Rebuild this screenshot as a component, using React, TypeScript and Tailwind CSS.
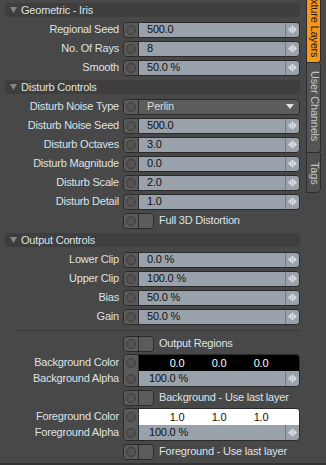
import type { ReactNode } from 'react';

const FONT = "font-['Liberation_Sans',Arial,sans-serif] text-[11px] tracking-[-0.2px]";

function SliderIcon() {
  return (
    <svg width="9" height="9" viewBox="0 0 9 9">
      <polygon points="0,4.5 3.6,1 3.6,8" fill="#d6dbdf" />
      <rect x="4" y="0.5" width="1" height="8" fill="#d6dbdf" />
      <polygon points="5.4,1 9,4.5 5.4,8" fill="#d6dbdf" />
    </svg>
  );
}

function Circle() {
  return <span className="block h-[10px] w-[10px] rounded-full border border-[#3c3c3c] bg-[#545454]" />;
}

function ToggleCell() {
  return (
    <div className="flex w-[15px] shrink-0 items-center justify-center border-r border-[#2c2c2c] bg-[#5a5a5a]">
      <Circle />
    </div>
  );
}

function Header({ title }: { title: string }) {
  return (
    <div className="flex h-[20px] items-center pl-[5px]">
      <div className="flex h-[14px] w-[295px] items-center rounded-[4px] bg-[#3e3e3e] pl-[5px]">
        <svg width="7" height="6" viewBox="0 0 7 6" className="mr-[4px]">
          <polygon points="0,0 7,0 3.5,6" fill="#858585" />
        </svg>
        <span className="leading-none text-[#dde2e6]">{title}</span>
      </div>
    </div>
  );
}

function Row({ label, children }: { label: string; children: ReactNode }) {
  return (
    <div className="flex h-[19px] items-center">
      <div className="w-[119px] shrink-0 text-right leading-none text-[#dde2e6]">{label}</div>
      <div className="ml-[4px] w-[177px]">{children}</div>
    </div>
  );
}

function NumberField({ value }: { value: string }) {
  return (
    <div className="flex h-[16px] overflow-hidden rounded-[4px] border border-[#2a2a2a]">
      <ToggleCell />
      <div className="flex flex-1 items-center bg-[#99a2aa] pl-[8px] leading-none text-[#111]">{value}</div>
      <div className="flex w-[14px] items-center justify-center border-l border-[#737a80] bg-[#99a2aa]">
        <SliderIcon />
      </div>
    </div>
  );
}

function Dropdown({ value }: { value: string }) {
  return (
    <div className="flex h-[16px] overflow-hidden rounded-[4px] border border-[#2a2a2a]">
      <ToggleCell />
      <div className="flex flex-1 items-center justify-between bg-[#5c5c5c] pl-[8px] pr-[5px] leading-none text-[#dadada]">
        <span>{value}</span>
        <svg width="8" height="5" viewBox="0 0 8 5">
          <polygon points="0,0 8,0 4,5" fill="#e2e2e2" />
        </svg>
      </div>
    </div>
  );
}

function CheckRow({ label }: { label: string }) {
  return (
    <div className="flex h-[19px] items-center pl-[123px]">
      <div className="flex h-[16px] w-[31px] overflow-hidden rounded-[4px] border border-[#2a2a2a]">
        <ToggleCell />
        <div className="flex-1 bg-[#5c5c5c]" />
      </div>
      <span className="ml-[5px] leading-none text-[#dde2e6]">{label}</span>
    </div>
  );
}

function ColorBlock({ name, value, light }: { name: string; value: string; light: boolean }) {
  return (
    <div className="flex h-[35px] items-center">
      <div className="flex w-[119px] shrink-0 flex-col text-right leading-none text-[#dde2e6]">
        <div className="flex h-[16px] items-center justify-end">{name} Color</div>
        <div className="flex h-[16px] items-center justify-end">{name} Alpha</div>
      </div>
      <div className="ml-[4px] flex h-[33px] w-[177px] overflow-hidden rounded-[4px] border border-[#2a2a2a]">
        <div className="flex w-[15px] shrink-0 flex-col border-r border-[#2c2c2c] bg-[#5a5a5a]">
          <div className="flex h-[16px] items-center justify-center">
            <Circle />
          </div>
          <div className="flex h-[15px] items-center justify-center">
            <Circle />
          </div>
        </div>
        <div className="flex flex-1 flex-col">
          <div
            className={`flex h-[16px] items-center pl-[17px] leading-none ${
              light ? 'bg-white text-[#111]' : 'bg-black text-white'
            }`}>
            {[value, value, value].map((v, i) => (
              <span key={i} className="w-[42px] text-center">
                {v}
              </span>
            ))}
          </div>
          <div className="flex flex-1">
            <div className="flex flex-1 items-center bg-[#99a2aa] pl-[10px] leading-none text-[#111]">100.0 %</div>
            <div className="flex w-[14px] items-center justify-center border-l border-[#737a80] bg-[#99a2aa]">
              <SliderIcon />
            </div>
          </div>
        </div>
      </div>
    </div>
  );
}

function Tabs() {
  return (
    <div className="ml-[2px] flex w-[15px] flex-col">
      <div className="flex h-[63px] flex-col justify-end overflow-hidden rounded-br-[3px] border border-t-0 border-[#2e2e2e] bg-[#f5961e]">
        <span className="whitespace-nowrap pb-[5px] pl-[1px] leading-none text-[#24190a] [writing-mode:vertical-rl]">
          Texture Layers
        </span>
      </div>
      <div className="flex h-[90px] flex-col overflow-hidden rounded-r-[3px] border border-t-0 border-[#2e2e2e] bg-[#555555]">
        <span className="whitespace-nowrap pl-[1px] pt-[8px] leading-none text-[#c4c8cc] [writing-mode:vertical-rl]">
          User Channels
        </span>
      </div>
      <div className="flex h-[40px] flex-col overflow-hidden rounded-br-[5px] border border-t-0 border-[#2e2e2e] bg-[#4f4f4f]">
        <span className="whitespace-nowrap pl-[1px] pt-[9px] leading-none text-[#c4c8cc] [writing-mode:vertical-rl]">
          Tags
        </span>
      </div>
    </div>
  );
}

export default function App() {
  return (
    <div className={`flex h-[465px] w-[326px] border-b-2 border-[#333] bg-[#484848] ${FONT}`}>
      <div className="w-[304px] shrink-0">
        <Header title="Geometric - Iris" />
        <Row label="Regional Seed">
          <NumberField value="500.0" />
        </Row>
        <Row label="No. Of Rays">
          <NumberField value="8" />
        </Row>
        <Row label="Smooth">
          <NumberField value="50.0 %" />
        </Row>

        <Header title="Disturb Controls" />
        <Row label="Disturb Noise Type">
          <Dropdown value="Perlin" />
        </Row>
        <Row label="Disturb Noise Seed">
          <NumberField value="500.0" />
        </Row>
        <Row label="Disturb Octaves">
          <NumberField value="3.0" />
        </Row>
        <Row label="Disturb Magnitude">
          <NumberField value="0.0" />
        </Row>
        <Row label="Disturb Scale">
          <NumberField value="2.0" />
        </Row>
        <Row label="Disturb Detail">
          <NumberField value="1.0" />
        </Row>
        <CheckRow label="Full 3D Distortion" />

        <Header title="Output Controls" />
        <Row label="Lower Clip">
          <NumberField value="0.0 %" />
        </Row>
        <Row label="Upper Clip">
          <NumberField value="100.0 %" />
        </Row>
        <Row label="Bias">
          <NumberField value="50.0 %" />
        </Row>
        <Row label="Gain">
          <NumberField value="50.0 %" />
        </Row>

        <div className="flex h-[8px] items-center pl-[16px]">
          <div className="h-px w-[284px] bg-[#3a3a3a]" />
        </div>

        <CheckRow label="Output Regions" />
        <ColorBlock name="Background" value="0.0" light={false} />
        <CheckRow label="Background - Use last layer" />
        <ColorBlock name="Foreground" value="1.0" light />
        <CheckRow label="Foreground - Use last layer" />
      </div>
      <Tabs />
    </div>
  );
}
